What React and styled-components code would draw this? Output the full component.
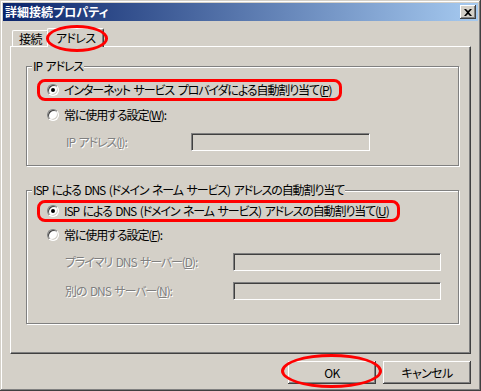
import styled, { createGlobalStyle, css } from "styled-components";

const GlobalStyle = createGlobalStyle`
  html, body {
    margin: 0;
    padding: 0;
    background: #d4d0c8;
  }
  body {
    font-family: "Noto Sans CJK JP", "Noto Sans", sans-serif;
    font-size: 12px;
    font-feature-settings: "palt";
    letter-spacing: -1.1px;
    word-spacing: 2px;
    color: #000;
  }
`;

const Window = styled.div`
  width: 481px;
  height: 391px;
  box-sizing: border-box;
  padding: 3px;
  background: #d4d0c8;
  box-shadow: inset -1px -1px #404040, inset 1px 1px #d4d0c8,
    inset -2px -2px #808080, inset 2px 2px #fff;
  display: flex;
  flex-direction: column;
`;

const TitleBar = styled.div`
  height: 18px;
  flex: none;
  display: flex;
  align-items: center;
  justify-content: space-between;
  padding: 0 2px 0 2px;
  background: linear-gradient(to right, #0a246a, #a6caf0);
`;

const Title = styled.span`
  color: #fff;
  font-weight: bold;
  letter-spacing: 0;
  line-height: 18px;
`;

const CloseButton = styled.div`
  width: 16px;
  height: 14px;
  background: #d4d0c8;
  box-shadow: inset -1px -1px #404040, inset 1px 1px #fff,
    inset -2px -2px #808080;
  display: flex;
  align-items: center;
  justify-content: center;
`;

const Body = styled.div`
  flex: 1;
  display: flex;
  flex-direction: column;
  padding: 7px 7px 0 7px;
`;

const TabStrip = styled.div`
  position: relative;
  z-index: 1;
  height: 18px;
  display: flex;
  align-items: flex-end;
  padding-left: 2px;
`;

const Tab = styled.div`
  position: relative;
  box-sizing: border-box;
  height: 16px;
  padding: 0 6px;
  line-height: 15px;
  letter-spacing: -0.6px;
  background: #d4d0c8;
  border-top: 1px solid #fff;
  border-left: 1px solid #fff;
  border-right: 1px solid #404040;
  border-radius: 2px 2px 0 0;
  box-shadow: inset -1px 0 #808080;
  ${(p) =>
    p.$active &&
    css`
      height: 19px;
      margin: 0 -2px -1px -2px;
      padding: 0 8px;
      line-height: 17px;
      &::after {
        content: "";
        position: absolute;
        inset: -4px -5px -5px -2px;
        border: 3px solid #f00;
        border-radius: 50%;
      }
    `}
`;

const Panel = styled.div`
  height: 308px;
  box-sizing: border-box;
  border-top: 1px solid #fff;
  border-left: 1px solid #fff;
  border-right: 1px solid #404040;
  border-bottom: 1px solid #404040;
  box-shadow: inset -1px -1px #808080;
  padding: 12px 11px 0 15px;
`;

const Group = styled.fieldset`
  margin: ${(p) => p.$mt || 0}px 0 0 0;
  padding: ${(p) => p.$pt}px 0 ${(p) => p.$pb}px 0;
  min-width: 0;
  border: 1px solid #808080;
  box-shadow: 1px 1px 0 #fff, inset 1px 1px 0 #fff;
`;

const Legend = styled.legend`
  margin-left: 5px;
  padding: 0 1px;
  line-height: 14px;
  background: #d4d0c8;
`;

const GroupBody = styled.div`
  padding-left: 20px;
`;

const Row = styled.div`
  display: flex;
  align-items: center;
  height: 20px;
  margin-top: ${(p) => p.$mt || 0}px;
`;

const Marked = styled.span`
  position: relative;
  display: inline-flex;
  align-items: center;
  &::after {
    content: "";
    position: absolute;
    inset: -3px -11px -3px -10px;
    border: 3px solid #f00;
    border-radius: 8px;
  }
`;

const Radio = styled.span`
  position: relative;
  flex: none;
  width: 12px;
  height: 12px;
  box-sizing: border-box;
  margin-right: 5px;
  border-radius: 50%;
  background: #fff;
  border: 1px solid;
  border-color: #808080 #fff #fff #808080;
  box-shadow: inset 1px 1px #404040, inset -1px -1px #d4d0c8;
  ${(p) =>
    p.$checked &&
    css`
      &::after {
        content: "";
        position: absolute;
        left: 3px;
        top: 3px;
        width: 4px;
        height: 4px;
        border-radius: 50%;
        background: #000;
      }
    `}
`;

const Label = styled.span`
  line-height: 16px;
  white-space: nowrap;
`;

const FieldLabel = styled.span`
  flex: none;
  width: ${(p) => p.$w}px;
  margin-left: ${(p) => p.$indent}px;
  color: #808080;
  text-shadow: 1px 1px 0 #fff;
  line-height: 16px;
  white-space: nowrap;
`;

const TextBox = styled.div`
  width: ${(p) => p.$w}px;
  height: 18px;
  box-sizing: border-box;
  background: #d4d0c8;
  border: 1px solid;
  border-color: #808080 #fff #fff #808080;
  box-shadow: inset 1px 1px #404040, inset -1px -1px #d4d0c8;
`;

const Footer = styled.div`
  display: flex;
  justify-content: flex-end;
  gap: 7px;
  padding-top: 7px;
`;

const Button = styled.div`
  position: relative;
  width: 88px;
  height: 23px;
  display: flex;
  align-items: center;
  justify-content: center;
  letter-spacing: -0.6px;
  background: #d4d0c8;
  box-shadow: inset -1px -1px #404040, inset 1px 1px #fff,
    inset -2px -2px #808080;
  ${(p) =>
    p.$marked &&
    css`
      &::after {
        content: "";
        position: absolute;
        inset: -7px -6px -4px -7px;
        border: 3px solid #f00;
        border-radius: 50%;
      }
    `}
`;

const CloseIcon = () => (
  <svg width="8" height="7" viewBox="0 0 8 7">
    <path d="M0 0h2l2 2 2-2h2L5 3.5 8 7H6L4 5 2 7H0l3-3.5z" fill="#000" />
  </svg>
);

export default function App() {
  return (
    <>
      <GlobalStyle />
      <Window>
        <TitleBar>
          <Title>詳細接続プロパティ</Title>
          <CloseButton>
            <CloseIcon />
          </CloseButton>
        </TitleBar>
        <Body>
          <TabStrip>
            <Tab>接続</Tab>
            <Tab $active>アドレス</Tab>
          </TabStrip>
          <Panel>
            <Group $pt={7} $pb={13}>
              <Legend>IP アドレス</Legend>
              <GroupBody>
                <Row>
                  <Marked>
                    <Radio $checked />
                    <Label>
                      インターネット サービス プロバイダによる自動割り当て(<u>P</u>)
                    </Label>
                  </Marked>
                </Row>
                <Row $mt={5}>
                  <Radio />
                  <Label>
                    常に使用する設定(<u>W</u>):
                  </Label>
                </Row>
                <Row $mt={7}>
                  <FieldLabel $indent={19} $w={125}>
                    IP アドレス(<u>I</u>):
                  </FieldLabel>
                  <TextBox $w={179} />
                </Row>
              </GroupBody>
            </Group>
            <Group $mt={17} $pt={4} $pb={22}>
              <Legend>
                ISP による DNS (ドメイン ネーム サービス) アドレスの自動割り当て
              </Legend>
              <GroupBody>
                <Row>
                  <Marked>
                    <Radio $checked />
                    <Label>
                      ISP による DNS (ドメイン ネーム サービス)
                      アドレスの自動割り当て(<u>U</u>)
                    </Label>
                  </Marked>
                </Row>
                <Row $mt={4}>
                  <Radio />
                  <Label>
                    常に使用する設定(<u>F</u>):
                  </Label>
                </Row>
                <Row $mt={7}>
                  <FieldLabel $indent={18} $w={168}>
                    プライマリ DNS サーバー(<u>D</u>):
                  </FieldLabel>
                  <TextBox $w={208} />
                </Row>
                <Row $mt={9}>
                  <FieldLabel $indent={18} $w={168}>
                    別の DNS サーバー(<u>N</u>):
                  </FieldLabel>
                  <TextBox $w={208} />
                </Row>
              </GroupBody>
            </Group>
          </Panel>
          <Footer>
            <Button $marked>OK</Button>
            <Button>キャンセル</Button>
          </Footer>
        </Body>
      </Window>
    </>
  );
}
